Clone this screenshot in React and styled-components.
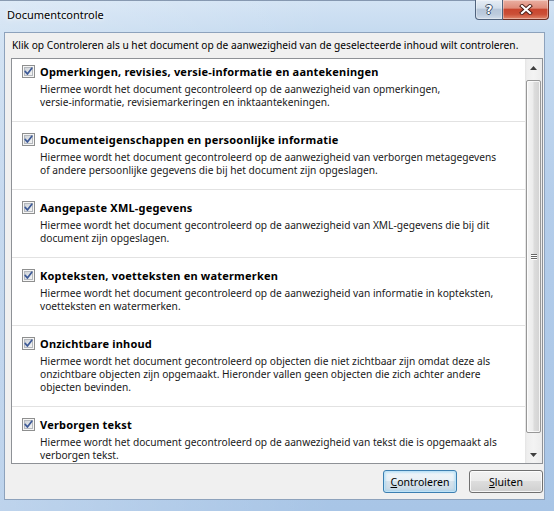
import React, { useId } from "react";
import styled, { createGlobalStyle } from "styled-components";

const GlobalStyle = createGlobalStyle`
  html, body { margin: 0; padding: 0; background: #a9c5e6; }
  body { font-family: "Noto Sans", sans-serif; }
`;

const Window = styled.div`
  width: 554px;
  height: 511px;
  box-sizing: border-box;
  display: flex;
  flex-direction: column;
  overflow: hidden;
  background: linear-gradient(90deg, rgba(255,255,255,0.25) 0%, rgba(255,255,255,0) 60%),
    linear-gradient(180deg, #d3e3f4 0px, #c6dbf0 30px, #b4cdea 200px, #a8c5e6 100%);
  box-shadow: inset 0 1px 0 rgba(70, 90, 120, 0.55);
`;

const TitleBar = styled.div`
  height: 32px;
  flex: none;
  display: flex;
  align-items: flex-start;
  padding-left: 7px;
`;

const Title = styled.div`
  font-size: 11px;
  line-height: 30px;
  color: #000;
  text-shadow: 0 0 6px rgba(255, 255, 255, 0.95), 0 0 3px rgba(255, 255, 255, 0.9);
`;

const CaptionGroup = styled.div`
  margin-left: auto;
  margin-right: 5px;
  display: flex;
`;

const CaptionButton = styled.div`
  height: 20px;
  box-sizing: border-box;
  display: flex;
  align-items: center;
  justify-content: center;
  border: 1px solid ${(p) => (p.$close ? "#6b2e24" : "#50637d")};
  border-top: none;
  width: ${(p) => (p.$close ? "46px" : "28px")};
  border-radius: ${(p) => (p.$close ? "0 0 4px 0" : "0 0 0 4px")};
  border-left-width: ${(p) => (p.$close ? "0" : "1px")};
  background: ${(p) =>
    p.$close
      ? "linear-gradient(180deg, #eab0a2 0%, #df8c7a 42%, #c9462f 50%, #cb4f37 75%, #e1876c 100%)"
      : "linear-gradient(180deg, #e6edf5 0%, #d2deeb 42%, #b6c6d9 50%, #bccbdd 75%, #d0dcea 100%)"};
  box-shadow: inset 0 0 0 1px rgba(255, 255, 255, 0.35);
`;

const HelpGlyph = styled.span`
  font-family: "DejaVu Sans", sans-serif;
  font-weight: bold;
  font-size: 12px;
  line-height: 1;
  color: #fff;
  text-shadow: 1px 0 0 #3a4d66, -1px 0 0 #3a4d66, 0 1px 0 #3a4d66, 0 -1px 0 #3a4d66;
`;

const Client = styled.div`
  flex: 1;
  margin: 0 9px 11px 4px;
  box-sizing: border-box;
  background: #f0f0f0;
  border: 1px solid #8da2bc;
  display: flex;
  flex-direction: column;
  padding: 5px 1px 0 6px;
  min-height: 0;
`;

const Instruction = styled.div`
  margin-left: 1px;
  font-size: 10.2px;
  line-height: 15px;
  color: #000;
  white-space: nowrap;
`;

const ListBox = styled.div`
  margin-top: 5px;
  height: 406px;
  box-sizing: border-box;
  border: 1px solid #8e9196;
  background: #fff;
  display: flex;
  flex: none;
`;

const Items = styled.div`
  flex: 1;
  overflow: hidden;
`;

const Item = styled.div`
  padding: ${(p) => (p.$first ? "5px" : "10px")} 0 12px 10px;
  border-bottom: 1px solid #e2e2e2;
`;

const ItemHeader = styled.div`
  display: flex;
  align-items: center;
  gap: 5px;
  height: 15px;
`;

const ItemTitle = styled.div`
  font-weight: bold;
  font-size: 11px;
  letter-spacing: 0.2px;
  color: #000;
  white-space: nowrap;
`;

const ItemDesc = styled.div`
  margin: 4px 0 0 18px;
  font-size: 10.2px;
  line-height: 13px;
  color: #1a1a1a;
  white-space: nowrap;
`;

const ScrollBar = styled.div`
  width: 17px;
  flex: none;
  display: flex;
  flex-direction: column;
  background: linear-gradient(90deg, #e4e4e4 0px, #eeeeee 2px, #f3f3f3 50%, #ececec 100%);
`;

const ArrowButton = styled.div`
  height: 17px;
  flex: none;
  display: flex;
  align-items: center;
  justify-content: center;
`;

const Track = styled.div`
  flex: 1;
  display: flex;
  flex-direction: column;
  padding: 4px 1px 13px 1px;
`;

const Thumb = styled.div`
  flex: 1;
  box-sizing: border-box;
  border: 1px solid #979797;
  border-radius: 2px;
  background: linear-gradient(90deg, #f4f4f4 0%, #ececec 45%, #dcdcdc 55%, #d2d2d2 100%);
  box-shadow: inset 0 0 0 1px rgba(255, 255, 255, 0.75);
  display: flex;
  align-items: center;
  justify-content: center;
`;

const Gripper = styled.div`
  width: 6px;
  display: flex;
  flex-direction: column;
  gap: 1px;
`;

const GripLine = styled.div`
  height: 1px;
  background: #666;
  box-shadow: 0 1px 0 #fff;
`;

const ButtonRow = styled.div`
  margin-top: 6px;
  display: flex;
  justify-content: flex-end;
  gap: 12px;
`;

const Button = styled.div`
  width: 74px;
  height: 23px;
  box-sizing: border-box;
  display: flex;
  align-items: center;
  justify-content: center;
  font-size: 10.5px;
  color: #000;
  border-radius: 3px;
  border: 1px solid ${(p) => (p.$default ? "#3c7fb1" : "#707070")};
  background: ${(p) =>
    p.$default
      ? "linear-gradient(180deg, #f0f6fa 0%, #e8f0f6 48%, #d7e3ec 50%, #c9d9e6 100%)"
      : "linear-gradient(180deg, #f2f2f2 0%, #ebebeb 48%, #dddddd 50%, #cfcfcf 100%)"};
  box-shadow: ${(p) =>
    p.$default
      ? "inset 0 0 0 1px #bfe3f7, inset 0 0 2px 2px rgba(120, 200, 240, 0.35)"
      : "inset 0 0 0 1px rgba(255, 255, 255, 0.8)"};
`;

function Check() {
  const id = useId().replace(/:/g, "");
  return (
    <svg width="13" height="13" viewBox="0 0 13 13" style={{ flex: "none" }}>
      <defs>
        <linearGradient id={`g${id}`} x1="0" y1="0" x2="1" y2="1">
          <stop offset="0" stopColor="#cbd0d6" />
          <stop offset="1" stopColor="#f7f7f7" />
        </linearGradient>
      </defs>
      <rect x="0.5" y="0.5" width="12" height="12" fill="#f6f6f6" stroke="#8e8f8f" />
      <rect x="2.5" y="2.5" width="8" height="8" fill={`url(#g${id})`} stroke="#b4b8bd" />
      <path d="M3.2 6.4 L5.4 9 L9.8 3.2" fill="none" stroke="#3d5a97" strokeWidth="1.7" strokeLinecap="round" strokeLinejoin="round" />
    </svg>
  );
}

function Arrow({ up }) {
  return (
    <svg width="7" height="4" viewBox="0 0 7 4">
      <path d={up ? "M0 4 L3.5 0 L7 4 Z" : "M0 0 L3.5 4 L7 0 Z"} fill="#3f3f3f" />
    </svg>
  );
}

const items = [
  {
    title: "Opmerkingen, revisies, versie-informatie en aantekeningen",
    lines: [
      "Hiermee wordt het document gecontroleerd op de aanwezigheid van opmerkingen,",
      "versie-informatie, revisiemarkeringen en inktaantekeningen.",
    ],
  },
  {
    title: "Documenteigenschappen en persoonlijke informatie",
    lines: [
      "Hiermee wordt het document gecontroleerd op de aanwezigheid van verborgen metagegevens",
      "of andere persoonlijke gegevens die bij het document zijn opgeslagen.",
    ],
  },
  {
    title: "Aangepaste XML-gegevens",
    lines: [
      "Hiermee wordt het document gecontroleerd op de aanwezigheid van XML-gegevens die bij dit",
      "document zijn opgeslagen.",
    ],
  },
  {
    title: "Kopteksten, voetteksten en watermerken",
    lines: [
      "Hiermee wordt het document gecontroleerd op de aanwezigheid van informatie in kopteksten,",
      "voetteksten en watermerken.",
    ],
  },
  {
    title: "Onzichtbare inhoud",
    lines: [
      "Hiermee wordt het document gecontroleerd op objecten die niet zichtbaar zijn omdat deze als",
      "onzichtbare objecten zijn opgemaakt. Hieronder vallen geen objecten die zich achter andere",
      "objecten bevinden.",
    ],
  },
  {
    title: "Verborgen tekst",
    lines: [
      "Hiermee wordt het document gecontroleerd op de aanwezigheid van tekst die is opgemaakt als",
      "verborgen tekst.",
    ],
  },
];

export default function App() {
  return (
    <>
      <GlobalStyle />
      <Window>
        <TitleBar>
          <Title>Documentcontrole</Title>
          <CaptionGroup>
            <CaptionButton>
              <HelpGlyph>?</HelpGlyph>
            </CaptionButton>
            <CaptionButton $close>
              <svg width="14" height="11" viewBox="0 0 14 11">
                <path d="M3 2 L11 9 M11 2 L3 9" stroke="#4a1c14" strokeWidth="4" strokeLinecap="square" />
                <path d="M3 2 L11 9 M11 2 L3 9" stroke="#ffffff" strokeWidth="2.2" strokeLinecap="square" />
              </svg>
            </CaptionButton>
          </CaptionGroup>
        </TitleBar>
        <Client>
          <Instruction>
            Klik op Controleren als u het document op de aanwezigheid van de geselecteerde inhoud wilt controleren.
          </Instruction>
          <ListBox>
            <Items>
              {items.map((it, i) => (
                <Item key={i} $first={i === 0}>
                  <ItemHeader>
                    <Check />
                    <ItemTitle>{it.title}</ItemTitle>
                  </ItemHeader>
                  <ItemDesc>
                    {it.lines.map((l, j) => (
                      <div key={j}>{l}</div>
                    ))}
                  </ItemDesc>
                </Item>
              ))}
            </Items>
            <ScrollBar>
              <ArrowButton>
                <Arrow up />
              </ArrowButton>
              <Track>
                <Thumb>
                  <Gripper>
                    <GripLine />
                    <GripLine />
                    <GripLine />
                  </Gripper>
                </Thumb>
              </Track>
              <ArrowButton>
                <Arrow />
              </ArrowButton>
            </ScrollBar>
          </ListBox>
          <ButtonRow>
            <Button $default>
              <span>
                <u>C</u>ontroleren
              </span>
            </Button>
            <Button>
              <span>
                <u>S</u>luiten
              </span>
            </Button>
          </ButtonRow>
        </Client>
      </Window>
    </>
  );
}
